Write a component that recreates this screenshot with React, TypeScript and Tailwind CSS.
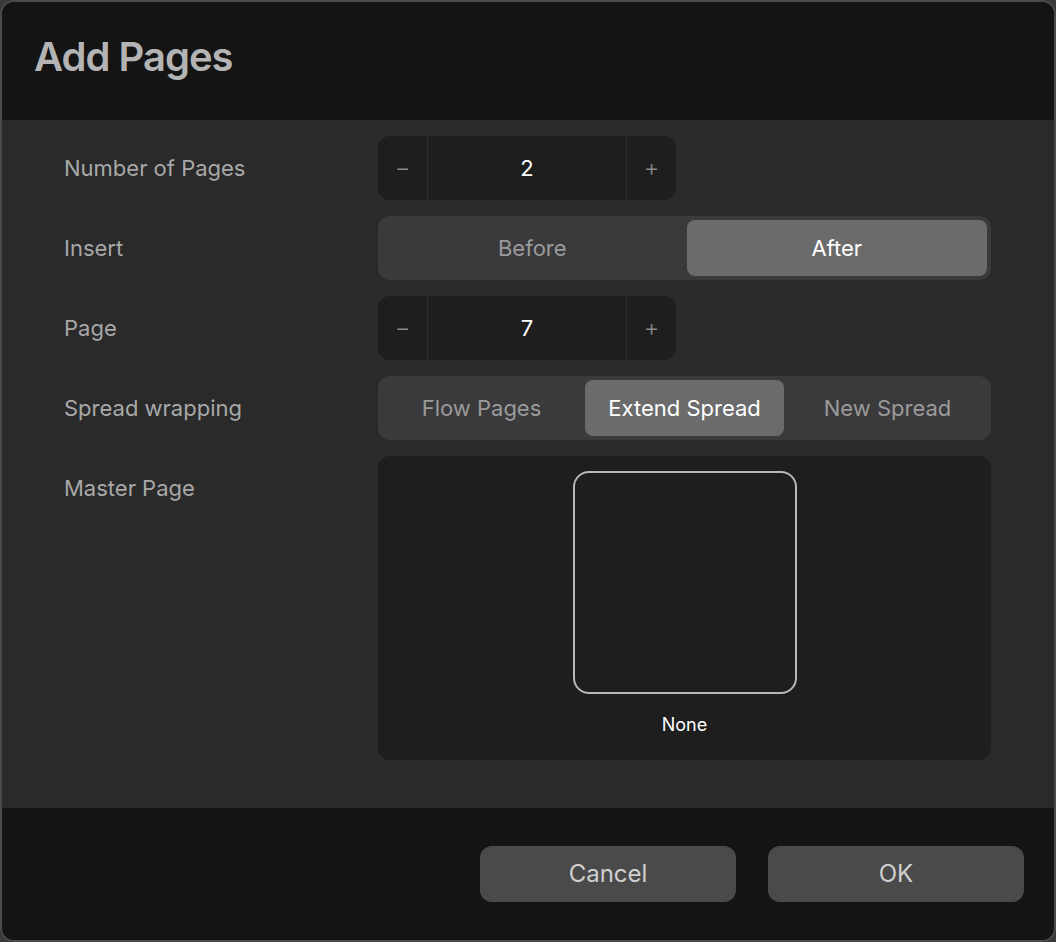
import React from 'react';

const font = { fontFamily: 'Inter, "Noto Sans", sans-serif' };

function Stepper({ value }: { value: string }) {
  return (
    <div className="flex h-16 w-[298px] rounded-xl bg-[#1e1e1e] text-[#8a8a8a]">
      <div className="flex w-[50px] items-center justify-center border-r border-[#2e2e2e] text-2xl font-light">−</div>
      <div className="flex flex-1 items-center justify-center text-[22px] text-white">{value}</div>
      <div className="flex w-[50px] items-center justify-center border-l border-[#2e2e2e] text-2xl font-light">+</div>
    </div>
  );
}

function Segments({ items, active }: { items: string[]; active: number }) {
  return (
    <div className="flex h-16 w-[613px] gap-1 rounded-xl bg-[#3a3a3c] p-1">
      {items.map((t, i) => (
        <div
          key={t}
          className={
            'flex flex-1 items-center justify-center rounded-lg text-[22px] ' +
            (i === active ? 'bg-[#6b6b6b] text-white' : 'text-[#9a9a9a]')
          }
        >
          {t}
        </div>
      ))}
    </div>
  );
}

export default function App() {
  const rows: [string, React.ReactNode][] = [
    ['Number of Pages', <Stepper value="2" />],
    ['Insert', <Segments items={['Before', 'After']} active={1} />],
    ['Page', <Stepper value="7" />],
    ['Spread wrapping', <Segments items={['Flow Pages', 'Extend Spread', 'New Spread']} active={1} />],
  ];
  return (
    <div className="h-[942px] w-[1056px] bg-[#3a3a3a]" style={font}>
      <div className="flex h-full flex-col overflow-hidden rounded-[14px] border-2 border-[#4a4a4a]">
        <div className="flex h-[118px] items-center bg-[#141414] px-8 pb-2">
          <h1 className="text-[40px] font-semibold tracking-tight text-[#b4b4b4]">Add Pages</h1>
        </div>
        <div className="flex flex-1 flex-col gap-4 bg-[#2a2a2a] pl-[62px] pt-4">
          {rows.map(([label, ctrl]) => (
            <div key={label} className="flex items-center">
              <div className="w-[314px] text-[22px] text-[#a8a8a8]">{label}</div>
              {ctrl}
            </div>
          ))}
          <div className="flex">
            <div className="w-[314px] pt-4 text-[22px] text-[#a8a8a8]">Master Page</div>
            <div className="flex h-[304px] w-[613px] flex-col items-center rounded-xl bg-[#1e1e1e] pt-[15px]">
              <div className="h-[223px] w-[224px] rounded-2xl border-2 border-[#b8b8b8]" />
              <div className="mt-[17px] text-lg text-white">None</div>
            </div>
          </div>
        </div>
        <div className="flex h-[132px] items-center justify-end gap-8 bg-[#141414] pr-[30px]">
          <button className="h-14 w-64 rounded-xl bg-[#4a4a4a] text-[24px] text-[#d0d0d0]">Cancel</button>
          <button className="h-14 w-64 rounded-xl bg-[#4a4a4a] text-[24px] text-[#d0d0d0]">OK</button>
        </div>
      </div>
    </div>
  );
}
